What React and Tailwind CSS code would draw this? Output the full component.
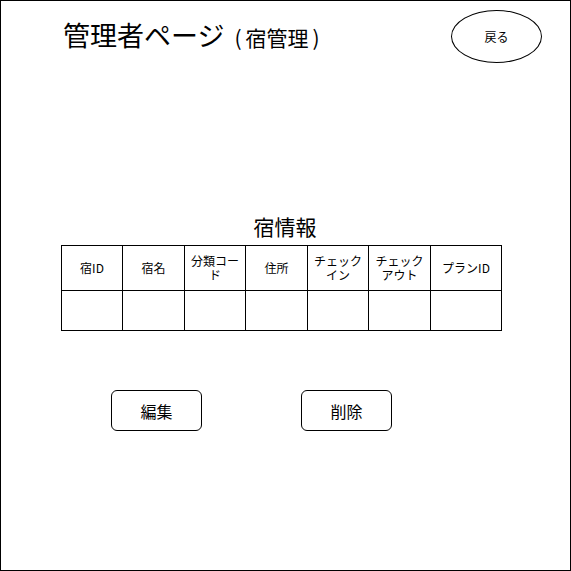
import React from 'react';

const headers = ['宿ID', '宿名', '分類コード', '住所', 'チェックイン', 'チェックアウト', 'プランID'];

const App = () => {
    return (
        <div
            className="w-[571px] h-[571px] border border-black bg-white text-black flex flex-col"
            style={{ fontFamily: '"Noto Sans CJK JP", "Noto Sans", sans-serif' }}
        >
            {/* Header */}
            <div className="flex items-center justify-between pl-[62px] pr-[28px] pt-[9px]">
                <h1 className="leading-none whitespace-nowrap mb-[5px]">
                    <span className="text-[27px]">管理者ページ</span>
                    <span className="text-[21px] ml-[10px]">
                        (<span className="mx-[4px]">宿管理</span>)
                    </span>
                </h1>
                <button className="w-[91px] h-[53px] rounded-[50%] border border-black text-[12px] flex items-center justify-center">
                    戻る
                </button>
            </div>

            {/* Table title */}
            <div className="mt-[151px] text-center text-[21px] leading-[24px] pr-[1px]">宿情報</div>

            {/* Table */}
            <div className="mt-[7px] ml-[60px] w-[441px] grid grid-cols-[61px_62px_61px_62px_61px_62px_71px] border-l border-t border-black">
                {headers.map((h) => (
                    <div
                        key={h}
                        className="h-[45px] border-r border-b border-black flex items-center justify-center text-center text-[12px] leading-[14px] px-[5px]"
                    >
                        {h}
                    </div>
                ))}
                {headers.map((h) => (
                    <div key={h + '-cell'} className="h-[40px] border-r border-b border-black" />
                ))}
            </div>

            {/* Actions */}
            <div className="flex gap-[99px] pl-[110px] mt-[59px]">
                <button className="w-[91px] h-[41px] rounded-md border border-black text-[16px]">編集</button>
                <button className="w-[91px] h-[41px] rounded-md border border-black text-[16px]">削除</button>
            </div>
        </div>
    );
};

export default App;
